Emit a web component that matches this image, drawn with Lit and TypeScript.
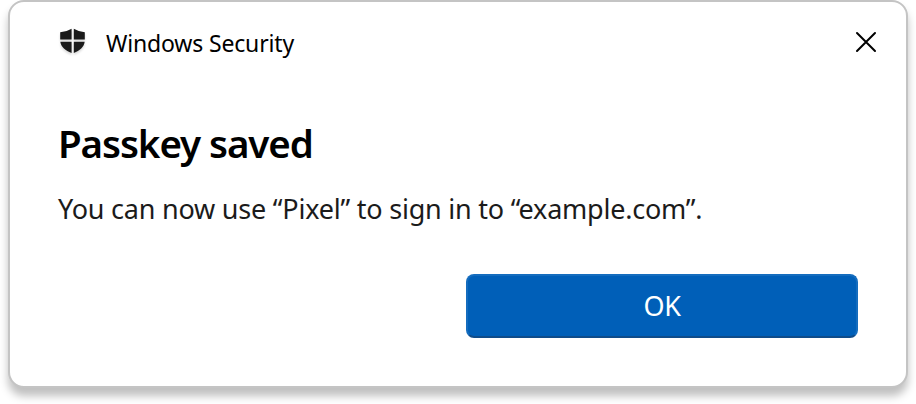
import { LitElement, html, css } from "lit";
import { customElement, property } from "lit/decorators.js";

@customElement("app-root")
export class AppRoot extends LitElement {
  static styles = css`
    :host {
      display: block;
      height: 404px;
      padding: 0 8px;
      box-sizing: border-box;
      overflow: hidden;
      background: #fff;
      font-family: "Noto Sans", "Open Sans", sans-serif;
      color: #000;
    }
    .dialog {
      box-sizing: border-box;
      height: 388px;
      padding: 0 48px;
      display: flex;
      flex-direction: column;
      background: #fff;
      border: 2px solid #c4c4c4;
      border-radius: 16px;
      box-shadow: 0 8px 8px rgba(0, 0, 0, 0.25);
    }
    .bar {
      display: flex;
      align-items: center;
      height: 80px;
      margin-right: -20px;
    }
    .shield {
      display: block;
      width: 30px;
      height: 30px;
      margin-right: 18px;
      filter: drop-shadow(0 2px 1px rgba(0, 0, 0, 0.15));
    }
    .app {
      flex: 1;
      font-size: 23px;
      line-height: 32px;
      letter-spacing: -0.16px;
      white-space: nowrap;
      padding-top: 2px;
    }
    .close {
      display: block;
      width: 24px;
      height: 24px;
      padding: 0;
      border: 0;
      background: none;
    }
    h1 {
      margin: 34px 0 0;
      font-size: 38.5px;
      line-height: 54px;
      font-weight: 600;
      letter-spacing: -1.08px;
      white-space: nowrap;
    }
    p {
      margin: 20px 0 0;
      font-size: 27px;
      line-height: 38px;
      letter-spacing: -0.22px;
      color: #1b1b1b;
      white-space: nowrap;
    }
    .ok {
      box-sizing: border-box;
      align-self: flex-end;
      width: 392px;
      height: 64px;
      margin-top: 46px;
      padding: 0;
      border: 2px solid #146cbe;
      border-bottom-color: #0f4c8a;
      border-radius: 8px;
      background: #005fb8;
      color: #fff;
      font: 400 27px/60px "Noto Sans", "Open Sans", sans-serif;
      letter-spacing: -0.5px;
    }
  `;

  @property() heading = "Passkey saved";
  @property() message = "You can now use “Pixel” to sign in to “example.com”.";

  render() {
    return html`
      <section class="dialog">
        <header class="bar">
          <svg class="shield" viewBox="0 0 30 30" fill="#1b1b1b">
            <path d="M2.2 5.2Q9 4.8 13.6 1.8V12.4H2.2ZM15.8 1.8Q20.6 4.8 26.8 5.2V12.4H15.8ZM2.3 14.8H13.6V26C7.5 23.4 3.1 20.4 2.3 14.8ZM15.8 14.8H26.7C25.9 20.4 21.8 23.4 15.8 26Z" />
          </svg>
          <span class="app">Windows Security</span>
          <button class="close" aria-label="Close">
            <svg width="24" height="24" viewBox="0 0 24 24" fill="none" stroke="#000" stroke-width="2" stroke-linecap="round">
              <path d="M3 3L21 21M21 3L3 21" />
            </svg>
          </button>
        </header>
        <h1>${this.heading}</h1>
        <p>${this.message}</p>
        <button class="ok">OK</button>
      </section>
    `;
  }
}
